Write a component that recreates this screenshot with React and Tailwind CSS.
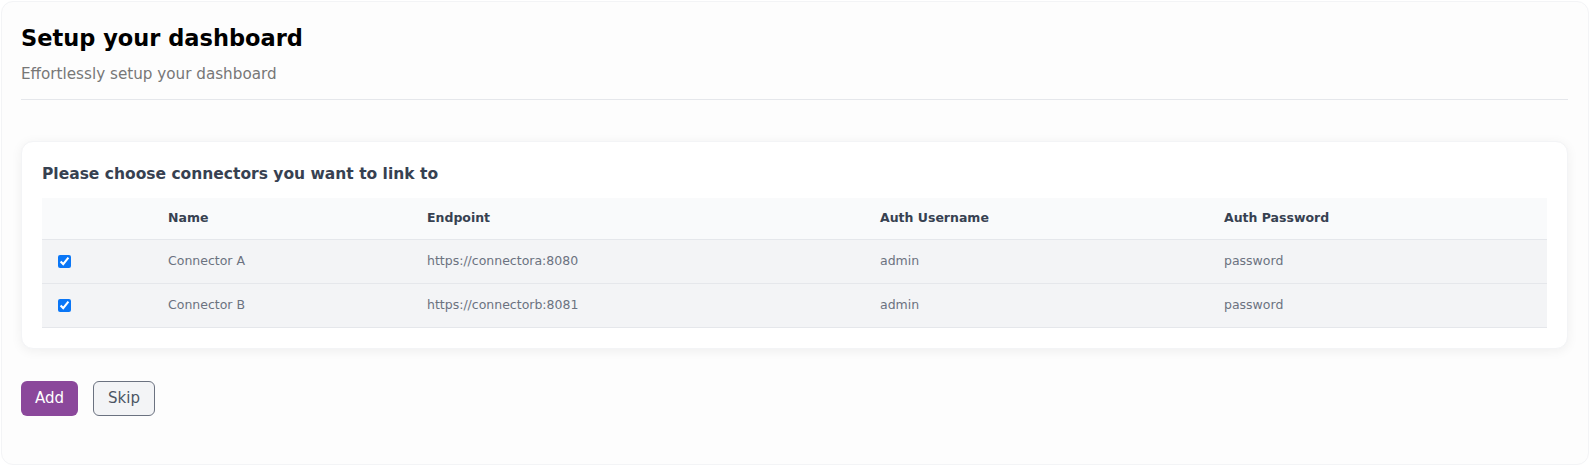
import React, { useState } from 'react';

const connectors = [
  { id: 'a', name: 'Connector A', endpoint: 'https://connectora:8080', username: 'admin', password: 'password' },
  { id: 'b', name: 'Connector B', endpoint: 'https://connectorb:8081', username: 'admin', password: 'password' },
];

const App = () => {
  const [selected, setSelected] = useState({ a: true, b: true });

  const toggle = (id) => setSelected((prev) => ({ ...prev, [id]: !prev[id] }));

  return (
    <div className="min-h-screen bg-white p-px" style={{ fontFamily: '"DejaVu Sans", Verdana, sans-serif' }}>
      <div className="min-h-[463px] rounded-xl border border-gray-100 bg-[#fdfdfd] pl-[19px] pr-5 pt-5 pb-12">
        {/* Header */}
        <div className="border-b border-[#e5e7eb] pb-[13px]">
          <h1 className="text-[22.5px] font-bold leading-8 text-black">Setup your dashboard</h1>
          <p className="mt-2 text-[15.2px] leading-6 text-[#777777]">Effortlessly setup your dashboard</p>
        </div>

        {/* Connectors card */}
        <div className="mt-[41px] rounded-xl border border-gray-100 bg-white p-5 shadow-[0_2px_12px_rgba(0,0,0,0.06)]">
          <h2 className="mb-3 text-[15.5px] font-bold leading-6 text-[#374151]">Please choose connectors you want to link to</h2>
          <table className="w-full table-fixed border-collapse text-left text-[12.5px]">
            <colgroup>
              <col className="w-[110px]" />
              <col className="w-[259px]" />
              <col className="w-[453px]" />
              <col className="w-[344px]" />
              <col />
            </colgroup>
            <thead>
              <tr className="h-[41px] border-b border-[#e5e7eb] bg-[#f9fafb] text-[#374151]">
                <th className="px-4" />
                <th className="px-4 font-bold">Name</th>
                <th className="px-4 font-bold">Endpoint</th>
                <th className="px-4 font-bold">Auth Username</th>
                <th className="px-4 font-bold">Auth Password</th>
              </tr>
            </thead>
            <tbody>
              {connectors.map((c) => (
                <tr key={c.id} className="h-[44px] border-b border-[#e5e7eb] bg-[#f3f4f6] text-[#6b7280]">
                  <td className="px-4">
                    <input
                      type="checkbox"
                      checked={selected[c.id]}
                      onChange={() => toggle(c.id)}
                      className="block h-[13px] w-[13px] accent-[#0a76f6]"
                    />
                  </td>
                  <td className="px-4">{c.name}</td>
                  <td className="px-4">{c.endpoint}</td>
                  <td className="px-4">{c.username}</td>
                  <td className="px-4">{c.password}</td>
                </tr>
              ))}
            </tbody>
          </table>
        </div>

        {/* Actions */}
        <div className="mt-8 flex gap-[15px]">
          <button className="h-[35px] rounded-md bg-[#8b489b] px-[14px] text-[15px] text-white">Add</button>
          <button className="h-[35px] rounded-md border border-[#6b7280] bg-[#f3f4f6] px-[14px] text-[15px] text-[#4b5563]">Skip</button>
        </div>
      </div>
    </div>
  );
};

export default App;
